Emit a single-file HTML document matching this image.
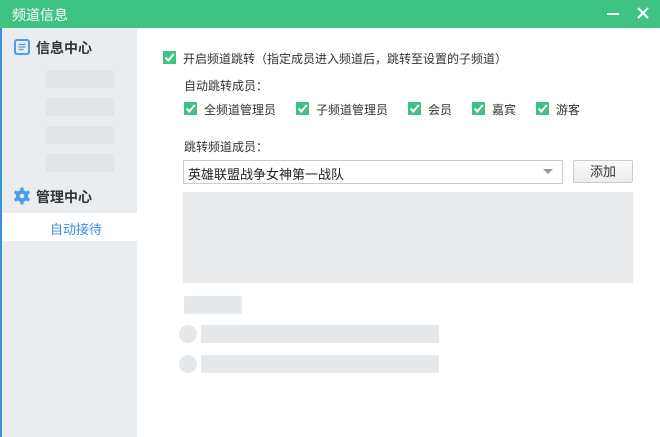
<!DOCTYPE html>
<html><head><meta charset="utf-8"><style>
*{margin:0;padding:0;box-sizing:border-box}
body{width:660px;height:437px;overflow:hidden;background:#fff;font-family:"Liberation Sans","Noto Sans CJK SC",sans-serif;font-size:12px;color:#333;position:relative}
.a{position:absolute}
.cb{position:absolute;width:13px;height:13px;background:#3ec383}
.cb svg{position:absolute;left:1px;top:1px}
.g{position:absolute;background:#e6e9eb;border-radius:2px}
</style></head><body>
<div class="a" style="left:0;top:0;width:660px;height:28px;background:#3ec383"></div>
<div class="a" style="left:12px;top:5px;color:#fff;font-size:14px">频道信息</div>
<div class="a" style="left:607px;top:13px;width:12px;height:2px;background:#fff"></div>
<svg class="a" style="left:637px;top:7px" width="12" height="12"><path d="M1 1L11 11M11 1L1 11" stroke="#fff" stroke-width="2.2"/></svg>
<div class="a" style="left:0;top:28px;width:2px;height:409px;background:#3b8ee0"></div>
<div class="a" style="left:2px;top:28px;width:135px;height:409px;background:#e9edf0"></div>
<svg class="a" style="left:14px;top:39px" width="16" height="16"><rect x="1" y="1" width="14" height="14" rx="2" fill="none" stroke="#4a9de8" stroke-width="2"/><path d="M4.5 5.5h7M4.5 8h7M4.5 10.5h5" stroke="#4a9de8" stroke-width="1.3"/></svg>
<div class="a" style="left:36px;top:38px;font-size:14px;font-weight:bold;color:#333">信息中心</div>
<div class="g" style="left:46px;top:70px;width:68px;height:18px;background:#e1e5e8"></div>
<div class="g" style="left:46px;top:98px;width:68px;height:18px;background:#e1e5e8"></div>
<div class="g" style="left:46px;top:126px;width:68px;height:18px;background:#e1e5e8"></div>
<div class="g" style="left:46px;top:154px;width:68px;height:18px;background:#e1e5e8"></div>
<svg class="a" style="left:13px;top:187px" width="18" height="18" viewBox="0 0 18 18"><g fill="#4a9de8"><circle cx="9" cy="9" r="6"/><rect x="7.3" y="0.5" width="3.4" height="17" rx="1"/><rect x="7.3" y="0.5" width="3.4" height="17" rx="1" transform="rotate(60 9 9)"/><rect x="7.3" y="0.5" width="3.4" height="17" rx="1" transform="rotate(120 9 9)"/></g><circle cx="9" cy="9" r="2.3" fill="#e9edf0"/></svg>
<div class="a" style="left:36px;top:187px;font-size:14px;font-weight:bold;color:#333">管理中心</div>
<div class="a" style="left:2px;top:213px;width:135px;height:28px;background:#fff"></div>
<div class="a" style="left:50px;top:219px;font-size:13px;color:#3b8ee0">自动接待</div>

<div class="cb" style="left:163px;top:51px"><svg width="11" height="11"><path d="M1.5 5.5L4.3 8.5L9.8 2" stroke="#fff" stroke-width="2" fill="none"/></svg></div>
<div class="a" style="left:183px;top:50px">开启频道跳转（指定成员进入频道后，跳转至设置的子频道）</div>
<div class="a" style="left:184px;top:77px">自动跳转成员：</div>
<div class="cb" style="left:184px;top:102px"><svg width="11" height="11"><path d="M1.5 5.5L4.3 8.5L9.8 2" stroke="#fff" stroke-width="2" fill="none"/></svg></div>
<div class="a" style="left:204px;top:101px">全频道管理员</div>
<div class="cb" style="left:296px;top:102px"><svg width="11" height="11"><path d="M1.5 5.5L4.3 8.5L9.8 2" stroke="#fff" stroke-width="2" fill="none"/></svg></div>
<div class="a" style="left:316px;top:101px">子频道管理员</div>
<div class="cb" style="left:408px;top:102px"><svg width="11" height="11"><path d="M1.5 5.5L4.3 8.5L9.8 2" stroke="#fff" stroke-width="2" fill="none"/></svg></div>
<div class="a" style="left:428px;top:101px">会员</div>
<div class="cb" style="left:472px;top:102px"><svg width="11" height="11"><path d="M1.5 5.5L4.3 8.5L9.8 2" stroke="#fff" stroke-width="2" fill="none"/></svg></div>
<div class="a" style="left:492px;top:101px">嘉宾</div>
<div class="cb" style="left:536px;top:102px"><svg width="11" height="11"><path d="M1.5 5.5L4.3 8.5L9.8 2" stroke="#fff" stroke-width="2" fill="none"/></svg></div>
<div class="a" style="left:556px;top:101px">游客</div>
<div class="a" style="left:184px;top:138px">跳转频道成员：</div>
<div class="a" style="left:183px;top:160px;width:380px;height:24px;border:1px solid #ccc;background:#fff"></div>
<div class="a" style="left:188px;top:164px;font-size:13px;color:#222">英雄联盟战争女神第一战队</div>
<svg class="a" style="left:543px;top:169px" width="10" height="6"><path d="M0 0h10L5 5z" fill="#999"/></svg>
<div class="a" style="left:573px;top:160px;width:60px;height:23px;border:1px solid #ccc;border-radius:2px;background:linear-gradient(#fafafa,#ececec);text-align:center;line-height:21px;font-size:13px">添加</div>
<div class="g" style="left:183px;top:192px;width:450px;height:91px;background:#e9ebed;border-radius:0"></div>
<div class="g" style="left:184px;top:296px;width:58px;height:18px"></div>
<div class="g" style="left:179px;top:325px;width:18px;height:18px;border-radius:50%"></div>
<div class="g" style="left:201px;top:325px;width:238px;height:18px;border-radius:0"></div>
<div class="g" style="left:179px;top:355px;width:18px;height:18px;border-radius:50%"></div>
<div class="g" style="left:201px;top:355px;width:238px;height:18px;border-radius:0"></div>
</body></html>
